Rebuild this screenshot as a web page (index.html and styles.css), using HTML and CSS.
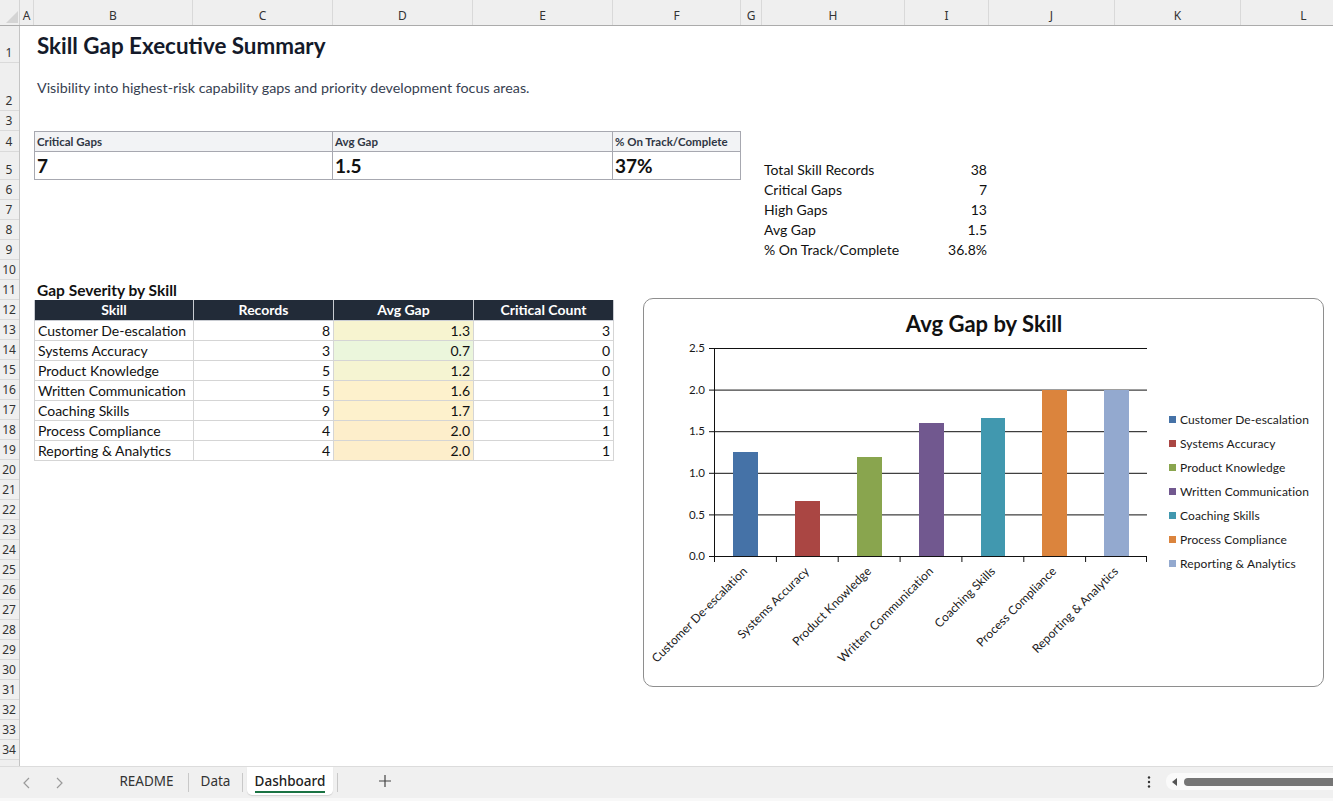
FILE: index.html
```html
<!DOCTYPE html>
<html lang="en">
<head>
<meta charset="utf-8">
<title>Skill Gap Executive Summary</title>
<link rel="stylesheet" href="styles.css">
</head>
<body>
<div class="app">
  <div class="colhead">
    <div class="corner"><svg width="20" height="26" viewBox="0 0 20 26"><polygon points="6,23 18,23 18,11" fill="#d4d4d4"/></svg></div>
    <div class="ch w-a">A</div>
    <div class="ch w-b">B</div>
    <div class="ch w-c">C</div>
    <div class="ch w-d">D</div>
    <div class="ch w-e">E</div>
    <div class="ch w-f">F</div>
    <div class="ch w-g">G</div>
    <div class="ch w-h">H</div>
    <div class="ch w-i">I</div>
    <div class="ch w-j">J</div>
    <div class="ch w-k">K</div>
    <div class="ch w-l">L</div>
  </div>
  <div class="body">
    <div class="rowhead">
      <div class="rh r1">1</div>
      <div class="rh r2">2</div>
      <div class="rh">3</div>
      <div class="rh r4">4</div>
      <div class="rh r5">5</div>
      <div class="rh">6</div><div class="rh">7</div><div class="rh">8</div><div class="rh">9</div><div class="rh">10</div>
      <div class="rh">11</div><div class="rh">12</div><div class="rh">13</div><div class="rh">14</div><div class="rh">15</div>
      <div class="rh">16</div><div class="rh">17</div><div class="rh">18</div><div class="rh">19</div><div class="rh">20</div>
      <div class="rh">21</div><div class="rh">22</div><div class="rh">23</div><div class="rh">24</div><div class="rh">25</div>
      <div class="rh">26</div><div class="rh">27</div><div class="rh">28</div><div class="rh">29</div><div class="rh">30</div>
      <div class="rh">31</div><div class="rh">32</div><div class="rh">33</div><div class="rh">34</div><div class="rh"></div>
    </div>
    <div class="cells">
      <div class="title">Skill Gap Executive Summary</div>
      <div class="subtitle">Visibility into highest-risk capability gaps and priority development focus areas.</div>

      <div class="kpi kpi-1">
        <div class="kpi-label">Critical Gaps</div>
        <div class="kpi-value">7</div>
      </div>
      <div class="kpi kpi-2">
        <div class="kpi-label">Avg Gap</div>
        <div class="kpi-value">1.5</div>
      </div>
      <div class="kpi kpi-3">
        <div class="kpi-label">% On Track/Complete</div>
        <div class="kpi-value">37%</div>
      </div>

      <div class="stat-l s5">Total Skill Records</div><div class="stat-v s5">38</div>
      <div class="stat-l s6">Critical Gaps</div><div class="stat-v s6">7</div>
      <div class="stat-l s7">High Gaps</div><div class="stat-v s7">13</div>
      <div class="stat-l s8">Avg Gap</div><div class="stat-v s8">1.5</div>
      <div class="stat-l s9">% On Track/Complete</div><div class="stat-v s9">36.8%</div>

      <div class="section">Gap Severity by Skill</div>
      <div class="tablewrap">
        <table class="gap">
          <colgroup><col class="c1"><col class="c2"><col class="c3"><col class="c4"></colgroup>
          <thead>
            <tr><th>Skill</th><th>Records</th><th>Avg Gap</th><th>Critical Count</th></tr>
          </thead>
          <tbody>
            <tr><td class="name">Customer De-escalation</td><td class="num">8</td><td class="num heat-y1">1.3</td><td class="num">3</td></tr>
            <tr><td class="name">Systems Accuracy</td><td class="num">3</td><td class="num heat-g">0.7</td><td class="num">0</td></tr>
            <tr><td class="name">Product Knowledge</td><td class="num">5</td><td class="num heat-y2">1.2</td><td class="num">0</td></tr>
            <tr><td class="name">Written Communication</td><td class="num">5</td><td class="num heat-o">1.6</td><td class="num">1</td></tr>
            <tr><td class="name">Coaching Skills</td><td class="num">9</td><td class="num heat-o">1.7</td><td class="num">1</td></tr>
            <tr><td class="name">Process Compliance</td><td class="num">4</td><td class="num heat-o2">2.0</td><td class="num">1</td></tr>
            <tr><td class="name">Reporting &amp; Analytics</td><td class="num">4</td><td class="num heat-o2">2.0</td><td class="num">1</td></tr>
          </tbody>
        </table>
      </div>

      <div class="chart">
        <svg class="chart-svg" width="679" height="387" viewBox="0 0 679 387">
          <text class="ct" x="340" y="33" text-anchor="middle">Avg Gap by Skill</text>
          <g class="grid">
            <line x1="65" y1="49.5" x2="503" y2="49.5"/>
            <line x1="65" y1="91.1" x2="503" y2="91.1"/>
            <line x1="65" y1="132.7" x2="503" y2="132.7"/>
            <line x1="65" y1="174.3" x2="503" y2="174.3"/>
            <line x1="65" y1="215.9" x2="503" y2="215.9"/>
            <line x1="65" y1="257.5" x2="503" y2="257.5"/>
            <line x1="70.5" y1="49" x2="70.5" y2="258"/>
          </g>
          <g class="yl">
            <text x="61" y="53">2.5</text>
            <text x="61" y="95">2.0</text>
            <text x="61" y="136">1.5</text>
            <text x="61" y="178">1.0</text>
            <text x="61" y="220">0.5</text>
            <text x="61" y="261">0.0</text>
          </g>
          <g class="bars">
            <rect x="89" y="153" width="25" height="104" fill="#4572a7"/>
            <rect x="151" y="202" width="25" height="55" fill="#aa4643"/>
            <rect x="213" y="158" width="25" height="99" fill="#89a54e"/>
            <rect x="275" y="124" width="25" height="133" fill="#71588f"/>
            <rect x="337" y="119" width="24" height="138" fill="#4198af"/>
            <rect x="398" y="91" width="25" height="166" fill="#db843d"/>
            <rect x="460" y="91" width="25" height="166" fill="#93a9cf"/>
          </g>
          <g class="grid">
            <line x1="70.5" y1="257" x2="70.5" y2="263"/>
            <line x1="132.4" y1="257" x2="132.4" y2="263"/>
            <line x1="194.2" y1="257" x2="194.2" y2="263"/>
            <line x1="256.1" y1="257" x2="256.1" y2="263"/>
            <line x1="317.9" y1="257" x2="317.9" y2="263"/>
            <line x1="379.8" y1="257" x2="379.8" y2="263"/>
            <line x1="441.6" y1="257" x2="441.6" y2="263"/>
            <line x1="502.5" y1="257" x2="502.5" y2="263"/>
          </g>
          <g class="xl">
            <text transform="translate(104 273) rotate(-45)">Customer De-escalation</text>
            <text transform="translate(166 273) rotate(-45)">Systems Accuracy</text>
            <text transform="translate(228 273) rotate(-45)">Product Knowledge</text>
            <text transform="translate(290 273) rotate(-45)">Written Communication</text>
            <text transform="translate(352 273) rotate(-45)">Coaching Skills</text>
            <text transform="translate(413 273) rotate(-45)">Process Compliance</text>
            <text transform="translate(475 273) rotate(-45)">Reporting &amp; Analytics</text>
          </g>
          <g class="legend">
            <rect x="525" y="117" width="7" height="7" fill="#4572a7"/><text x="536" y="125">Customer De-escalation</text>
            <rect x="525" y="141" width="7" height="7" fill="#aa4643"/><text x="536" y="149">Systems Accuracy</text>
            <rect x="525" y="165" width="7" height="7" fill="#89a54e"/><text x="536" y="173">Product Knowledge</text>
            <rect x="525" y="189" width="7" height="7" fill="#71588f"/><text x="536" y="197">Written Communication</text>
            <rect x="525" y="213" width="7" height="7" fill="#4198af"/><text x="536" y="221">Coaching Skills</text>
            <rect x="525" y="237" width="7" height="7" fill="#db843d"/><text x="536" y="245">Process Compliance</text>
            <rect x="525" y="261" width="7" height="7" fill="#93a9cf"/><text x="536" y="269">Reporting &amp; Analytics</text>
          </g>
        </svg>
      </div>
    </div>
  </div>
  <div class="tabbar">
    <div class="nav">
      <svg width="10" height="12" viewBox="0 0 10 12"><polyline points="7,1 2,6 7,11" fill="none" stroke="#9a9a9a" stroke-width="1.2"/></svg>
      <svg width="10" height="12" viewBox="0 0 10 12"><polyline points="3,1 8,6 3,11" fill="none" stroke="#9a9a9a" stroke-width="1.2"/></svg>
    </div>
    <div class="tabs">
      <div class="tab t-readme">README</div>
      <div class="sep"></div>
      <div class="tab t-data">Data</div>
      <div class="sep"></div>
      <div class="tab active"><span>Dashboard</span></div>
      <div class="sep"></div>
      <div class="add"><svg width="14" height="14" viewBox="0 0 14 14"><path d="M7 1v12M1 7h12" stroke="#444" stroke-width="1.2"/></svg></div>
    </div>
    <div class="spacer"></div>
    <div class="more"><svg width="4" height="14" viewBox="0 0 4 14"><circle cx="2" cy="2.5" r="1.2" fill="#333"/><circle cx="2" cy="7" r="1.2" fill="#333"/><circle cx="2" cy="11.5" r="1.2" fill="#333"/></svg></div>
    <div class="hscroll">
      <svg width="8" height="10" viewBox="0 0 8 10"><polygon points="6,1 1,5 6,9" fill="#555"/></svg>
      <div class="thumb"></div>
    </div>
  </div>
</div>
</body>
</html>
```

FILE: styles.css
```css
* { box-sizing: border-box; }
html, body { margin: 0; padding: 0; }
body {
  width: 1333px;
  height: 801px;
  overflow: hidden;
  background: #ffffff;
  font-family: Lato, "Liberation Sans", sans-serif;
  color: #111;
}
.app {
  width: 1333px;
  height: 801px;
  display: flex;
  flex-direction: column;
}

/* column header */
.colhead {
  height: 26px;
  flex: none;
  display: flex;
  background: #efefef;
  border-bottom: 1px solid #ababab;
  overflow: hidden;
  font-family: "Noto Sans", "Open Sans", sans-serif;
  font-size: 12px;
  color: #333;
}
.corner { width: 20px; flex: none; border-right: 1px solid #d4d4d4; }
.corner svg { display: block; }
.ch {
  flex: none;
  display: flex;
  align-items: center;
  justify-content: center;
  border-right: 1px solid #d9d9d9;
  padding-top: 5px;
}
.w-a { width: 14px; }
.w-b { width: 159px; }
.w-c { width: 140px; }
.w-d { width: 140px; }
.w-e { width: 140px; }
.w-f { width: 128px; }
.w-g { width: 21px; }
.w-h { width: 143px; }
.w-i { width: 84px; }
.w-j { width: 126px; }
.w-k { width: 126px; }
.w-l { width: 126px; }

/* body */
.body {
  flex: 1;
  display: flex;
  min-height: 0;
  overflow: hidden;
}
.rowhead {
  width: 20px;
  flex: none;
  background: #efefef;
  border-right: 1px solid #c4c4c4;
  font-family: "Noto Sans", "Open Sans", sans-serif;
  font-size: 12px;
  color: #333;
  overflow: hidden;
}
.rh {
  height: 20px;
  display: flex;
  align-items: flex-end;
  justify-content: center;
  border-bottom: 1px solid #dadada;
  line-height: 16px;
  padding-bottom: 1px;
  padding-right: 1px;
}
.rh.r1 { height: 37px; }
.rh.r2 { height: 48px; }
.rh.r4 { height: 21px; }
.rh.r5 { height: 28px; }

.cells {
  flex: 1;
  position: relative;
  display: grid;
  grid-template-columns: 14px 159px 140px 140px 140px 128px 20px 144px 84px 126px 126px 1fr;
  grid-template-rows: 37px 48px 20px 21px 28px repeat(29, 20px) 1fr;
  overflow: hidden;
}

.title {
  grid-column: 2 / 8;
  grid-row: 1;
  align-self: center;
  padding-left: 3px;
  font-weight: 700;
  font-size: 22.4px;
  color: #141a2a;
  white-space: nowrap;
  padding-top: 2px;
}
.subtitle {
  grid-column: 2 / 10;
  grid-row: 2;
  align-self: center;
  padding-left: 3px;
  font-size: 14.3px;
  color: #374151;
  white-space: nowrap;
}

/* KPI boxes */
.kpi {
  grid-row: 4 / 6;
  display: flex;
  flex-direction: column;
  border: 1px solid #a7a8b0;
}
.kpi-1 { grid-column: 2 / 4; }
.kpi-2 { grid-column: 4 / 6; border-left: none; }
.kpi-3 { grid-column: 6 / 7; border-left: none; }
.kpi-2, .kpi-3 { margin-left: -1px; }
.kpi-label {
  height: 20px;
  flex: none;
  background: #f2f3f5;
  border-bottom: 1px solid #a7a8b0;
  font-size: 11.5px;
  font-weight: 700;
  color: #2f3644;
  padding: 3px 0 0 2px;
  white-space: nowrap;
}
.kpi-2 .kpi-label, .kpi-3 .kpi-label, .kpi-2 .kpi-value, .kpi-3 .kpi-value { border-left: 1px solid #a7a8b0; }
.kpi-value {
  flex: 1;
  font-size: 19px;
  font-weight: 700;
  color: #111;
  padding: 1px 0 0 2px;
  line-height: 25px;
}

/* stats */
.stat-l, .stat-v {
  display: flex;
  align-items: flex-end;
  font-size: 14px;
  color: #111;
  white-space: nowrap;
  padding-bottom: 2px;
  line-height: 17px;
}
.stat-l { grid-column: 8; padding-left: 3px; }
.stat-v { grid-column: 9; justify-content: flex-end; padding-right: 2px; }
.s5 { grid-row: 5; padding-bottom: 2px; }
.s6 { grid-row: 6; }
.s7 { grid-row: 7; }
.s8 { grid-row: 8; }
.s9 { grid-row: 9; }

/* table */
.section {
  grid-column: 2 / 5;
  grid-row: 11;
  align-self: end;
  padding-left: 3px;
  font-weight: 700;
  font-size: 15.5px;
  line-height: 19px;
  color: #111;
  white-space: nowrap;
}
.tablewrap {
  grid-column: 2 / 6;
  grid-row: 12 / 20;
}
.gap {
  border-collapse: collapse;
  table-layout: fixed;
  width: 579px;
  font-size: 14px;
}
.gap .c1 { width: 159px; }
.gap .c2 { width: 140px; }
.gap .c3 { width: 140px; }
.gap .c4 { width: 140px; }
.gap th, .gap td {
  height: 20px;
  padding: 0 3px;
  line-height: 18px;
  white-space: nowrap;
  overflow: hidden;
}
.gap th {
  background: #222b38;
  color: #fff;
  font-weight: 700;
  text-align: center;
  border: 1px solid #c9ccd2;
  border-top: none;
}
.gap td {
  border: 1px solid #d5d5d5;
  color: #111;
  padding-top: 1px;
}
.gap td.num { text-align: right; }
.heat-y1 { background: #f7f4d0; }
.heat-g { background: #ebf6dc; }
.heat-y2 { background: #f5f4d2; }
.heat-o { background: #fdf1cc; }
.heat-o2 { background: #fdeecb; }

/* chart */
.chart {
  position: absolute;
  left: 623px;
  top: 272px;
  width: 681px;
  height: 389px;
  border: 1px solid #8e8e8e;
  border-radius: 10px;
  background: #fff;
  overflow: hidden;
}
.chart-svg { display: block; }
.chart-svg text { font-family: Lato, "Liberation Sans", sans-serif; fill: #1a1a1a; }
.chart-svg .ct { font-size: 22px; font-weight: 700; fill: #111; }
.grid line { stroke: #111; stroke-width: 1; }
.yl text { font-size: 11.5px; text-anchor: end; }
.xl text { font-size: 12px; text-anchor: end; letter-spacing: 0.1px; }
.legend text { font-size: 12px; letter-spacing: 0.1px; }

/* tab bar */
.tabbar {
  height: 35px;
  flex: none;
  background: #f0f0f0;
  border-top: 1px solid #dcdcdc;
  border-bottom: 3px solid #f8f8f8;
  display: flex;
  align-items: flex-start;
  font-family: "Noto Sans", "Open Sans", sans-serif;
  font-size: 13.5px;
  color: #333;
}
.nav {
  display: flex;
  gap: 22px;
  padding: 10px 0 0 22px;
  width: 100px;
  flex: none;
}
.nav svg { display: block; }
.tabs {
  display: flex;
  align-items: flex-start;
}
.tab {
  height: 28px;
  display: flex;
  align-items: center;
  justify-content: center;
}
.t-readme { width: 88px; padding-left: 5px; }
.t-data { width: 53px; }
.sep { width: 1px; height: 19px; background: #c8c8c8; margin-top: 6px; }
.tab.active {
  width: 86px;
  margin: 0 4px;
  background: #fff;
  border-radius: 0 0 5px 5px;
  color: #222;
  font-weight: 500;
  box-shadow: 0 1px 1px rgba(0,0,0,0.12);
}
.tab.active span {
  border-bottom: 2px solid #1a7343;
  line-height: 18px;
  padding: 0 0 1px;
  margin-top: 3px;
}
.add { width: 94px; display: flex; justify-content: center; padding-top: 7px; }
.add svg { display: block; }
.spacer { flex: 1; }
.more { width: 20px; padding-top: 8px; display: flex; justify-content: center; margin-right: 7px; }
.more svg { display: block; }
.hscroll {
  width: 167px;
  height: 17px;
  margin-top: 6px;
  background: #fafafa;
  border-radius: 8px 0 0 8px;
  display: flex;
  align-items: center;
  padding-left: 5px;
  gap: 5px;
}
.hscroll svg { display: block; }
.thumb {
  flex: 1;
  height: 8px;
  background: #757575;
  border-radius: 4px 0 0 4px;
}
```
